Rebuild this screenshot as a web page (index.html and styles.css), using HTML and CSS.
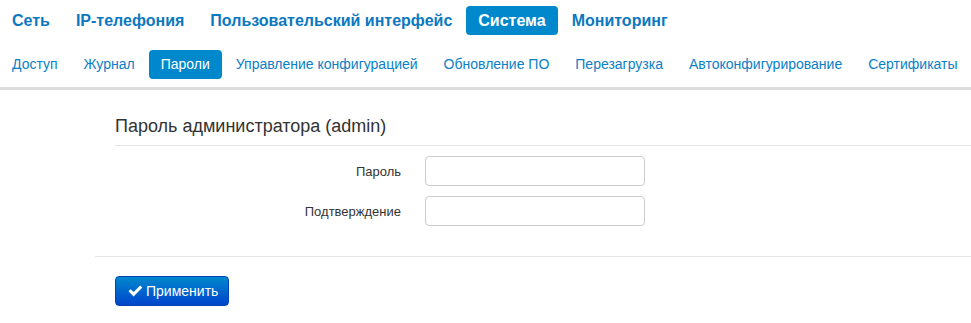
FILE: index.html
```html
<!DOCTYPE html>
<html lang="ru">
<head>
    <meta charset="UTF-8">
    <meta name="viewport" content="width=device-width, initial-scale=1.0">
    <title>Система - Пароли</title>
    <link rel="stylesheet" href="styles.css">
</head>
<body>
    <!-- Main menu -->
    <ul class="nav nav-main">
        <li><a href="#">Сеть</a></li>
        <li><a href="#">IP-телефония</a></li>
        <li><a href="#">Пользовательский интерфейс</a></li>
        <li class="active"><a href="#">Система</a></li>
        <li><a href="#">Мониторинг</a></li>
    </ul>

    <!-- Section menu -->
    <ul class="nav nav-sub">
        <li><a href="#">Доступ</a></li>
        <li><a href="#">Журнал</a></li>
        <li class="active"><a href="#">Пароли</a></li>
        <li><a href="#">Управление конфигурацией</a></li>
        <li><a href="#">Обновление ПО</a></li>
        <li><a href="#">Перезагрузка</a></li>
        <li><a href="#">Автоконфигурирование</a></li>
        <li><a href="#">Сертификаты</a></li>
    </ul>

    <form class="form-horizontal">
        <div class="fieldset">
            <div class="legend">Пароль администратора (admin)</div>
            <div class="control-group">
                <label class="control-label" for="pass">Пароль</label>
                <input type="password" id="pass">
            </div>
            <div class="control-group">
                <label class="control-label" for="pass2">Подтверждение</label>
                <input type="password" id="pass2">
            </div>
        </div>
        <div class="form-actions">
            <button type="button" class="btn-primary">
                <svg class="icon-ok" viewBox="0 0 15 12" width="15" height="12"><path d="M0.5 6.3 L2.6 4.2 L5.6 7.1 L12.2 0.5 L14.4 2.6 L5.6 11.4 Z" fill="#fff"/></svg>
                Применить
            </button>
        </div>
    </form>
</body>
</html>
```

FILE: styles.css
```css
body {
    margin: 0;
    font-family: "Liberation Sans", Arial, sans-serif;
    color: #333;
    background: #fff;
}
.nav {
    display: flex;
    list-style: none;
    margin: 0;
    padding: 0;
}
.nav li {
    flex-shrink: 0;
    margin-right: 2px;
    white-space: nowrap;
}
.nav a {
    display: block;
    padding: 4px 12px;
    line-height: 21px;
    border-radius: 4px;
    text-decoration: none;
    color: #0a80c8;
}
.nav .active a {
    background: #0088cc;
    color: #fff;
}
.nav-main {
    padding-top: 6px;
}
.nav-main a {
    font-size: 16px;
    font-weight: bold;
    color: #0b78c0;
}
.nav-sub {
    margin-top: 15px;
    padding-bottom: 8px;
    border-bottom: 3px solid #dddddd;
}
.nav-sub a {
    font-size: 14px;
}
.form-horizontal {
    margin: 0 0 0 95px;
}
.fieldset {
    padding: 17px 0 0 20px;
}
.legend {
    font-size: 18px;
    line-height: 38px;
    color: #333;
    border-bottom: 1px solid #e5e5e5;
}
.control-group {
    display: flex;
    align-items: center;
    margin-top: 10px;
}
.control-label {
    width: 286px;
    margin-right: 24px;
    text-align: right;
    font-size: 13px;
    color: #333;
}
.control-group input {
    box-sizing: border-box;
    width: 220px;
    height: 30px;
    margin: 0;
    padding: 4px 6px;
    border: 1px solid #cccccc;
    border-radius: 4px;
    font-size: 13px;
}
.form-actions {
    margin-top: 30px;
    padding: 19px 20px 20px;
    border-top: 1px solid #e5e5e5;
}
.btn-primary {
    display: flex;
    align-items: center;
    gap: 3px;
    box-sizing: border-box;
    height: 30px;
    padding: 0 10px 0 12px;
    border: 1px solid #0044b3;
    border-radius: 4px;
    background: linear-gradient(#0088cc, #0044cc);
    color: #fff;
    font-family: "Liberation Sans", Arial, sans-serif;
    font-size: 14px;
}
.icon-ok {
    display: block;
}
```
